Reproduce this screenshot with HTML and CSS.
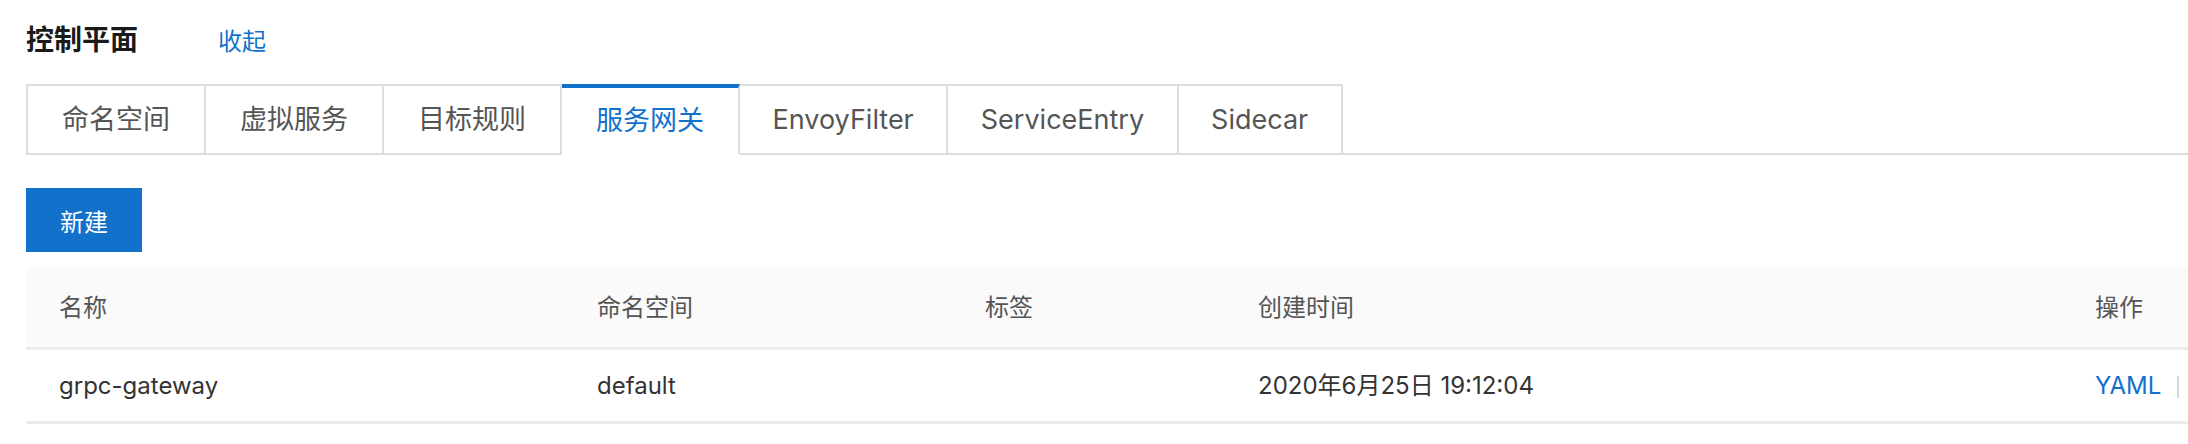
FILE: index.html
```html
<!DOCTYPE html>
<html lang="zh-CN">
<head>
<meta charset="utf-8">
<title>控制平面 – 服务网关</title>
<meta name="viewport" content="width=device-width,initial-scale=1">
<link rel="stylesheet" href="styles.css">
</head>
<body>
<div class="head">
  <h1>控制平面</h1>
  <a class="link" href="#">收起</a>
</div>

<div class="tabs">
  <div class="tab">命名空间</div>
  <div class="tab">虚拟服务</div>
  <div class="tab">目标规则</div>
  <div class="tab active">服务网关</div>
  <div class="tab en">EnvoyFilter</div>
  <div class="tab en">ServiceEntry</div>
  <div class="tab en">Sidecar</div>
</div>

<button class="btn">新建</button>

<table class="list">
  <colgroup>
    <col style="width:538px"><col style="width:388px"><col style="width:273px"><col style="width:837px"><col>
  </colgroup>
  <thead>
    <tr><th>名称</th><th>命名空间</th><th>标签</th><th>创建时间</th><th>操作</th></tr>
  </thead>
  <tbody>
    <tr>
      <td>grpc-gateway</td>
      <td>default</td>
      <td></td>
      <td>2020年6月25日 19:12:04</td>
      <td><a class="link" href="#">YAML</a><span class="sep"></span></td>
    </tr>
  </tbody>
</table>
</body>
</html>
```

FILE: styles.css
```css
:root{--blue:#1271cb;--line:#dddddd;--row:#ececec}
html,body{overflow:hidden}
body{margin:0;padding:20px 0 0 26px;font-family:Inter,"Noto Sans CJK SC",sans-serif;color:#333;background:#fff}
.head{display:flex;align-items:baseline;height:40px;line-height:40px}
h1{font-size:28px;font-weight:700;color:#1a1a1a;margin:0 80px 0 0}
.link{color:var(--blue);text-decoration:none;font-size:24px}
.tabs{display:flex;margin-top:24px;border-bottom:2px solid var(--line)}
.tab{font-size:27px;line-height:67px;padding:0 34px;color:#555;border:2px solid var(--line);border-left:0;margin-bottom:-2px;background:#fff}
.tab.en{padding:0 32.5px}
.tab:first-child{border-left:2px solid var(--line)}
.tab.active{color:var(--blue);border-top:4px solid var(--blue);line-height:65px;border-bottom-color:#fff}
.btn{display:block;margin-top:33px;width:116px;height:64px;border:0;background:var(--blue);color:#fff;font:24px Inter,"Noto Sans CJK SC",sans-serif;padding:0}
.list{margin-top:16px;width:2162px;table-layout:fixed;border-collapse:separate;border-spacing:0;font-size:24px}
.list th,.list td{text-align:left;padding:0 33px;white-space:nowrap;border-bottom:3px solid var(--row)}
.list th{font-weight:400;color:#555;background:#fafafa;line-height:79px}
.list td{color:#333;line-height:71px}
.sep{display:inline-block;width:2px;height:22px;background:#d9d9d9;margin-left:16px;vertical-align:middle}
```
